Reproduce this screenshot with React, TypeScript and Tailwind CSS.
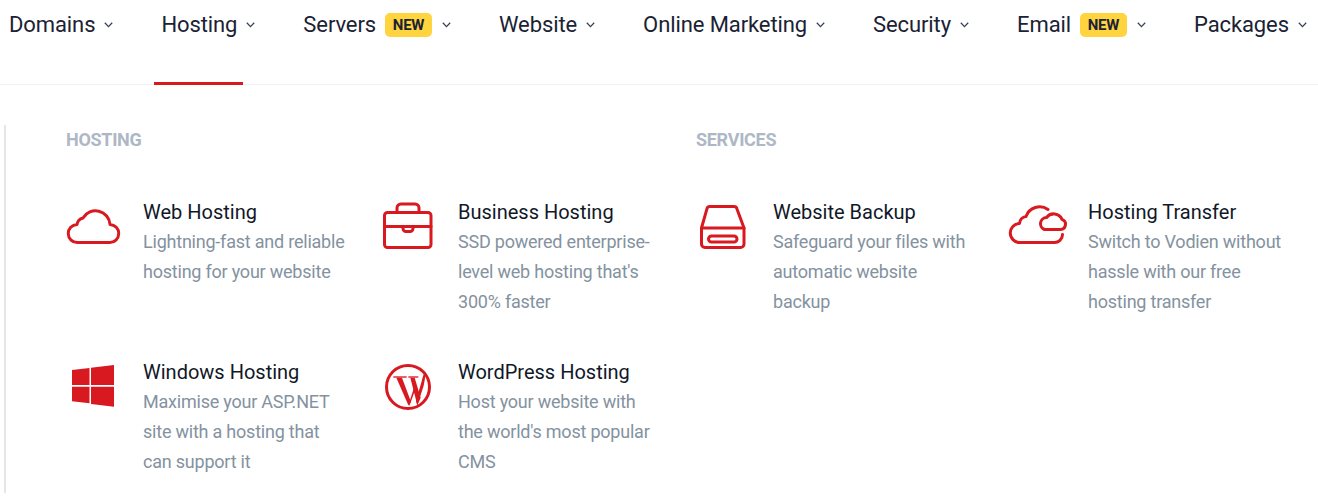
import type { ReactNode } from "react";

const navItems = [
  { label: "Domains" },
  { label: "Hosting", active: true },
  { label: "Servers", badge: true },
  { label: "Website" },
  { label: "Online Marketing" },
  { label: "Security" },
  { label: "Email", badge: true },
  { label: "Packages" },
];

function IconBox({ children }: { children: ReactNode }) {
  return (
    <svg
      viewBox="0 0 60 60"
      fill="none"
      stroke="#d81920"
      strokeWidth="3"
      strokeLinecap="round"
      strokeLinejoin="round"
      className="h-[60px] w-[60px] overflow-visible"
    >
      {children}
    </svg>
  );
}

const CloudIcon = () => (
  <IconBox>
    <path d="M11.5 45.5H43.5A9 9 0 0 0 44 27.5A14.5 14.5 0 0 0 17 21A8 8 0 0 0 11 27.5A9 9 0 0 0 11.5 45.5Z" />
  </IconBox>
);

const BriefcaseIcon = () => (
  <IconBox>
    <rect x="3.5" y="15.5" width="46.5" height="35" rx="3" />
    <path d="M16 15V11a4 4 0 0 1 4-4h14a4 4 0 0 1 4 4v4" />
    <path d="M3.5 29.5H50" />
    <path d="M22 29.5v2a3 3 0 0 0 3 3h4a3 3 0 0 0 3-3v-2" />
  </IconBox>
);

const DriveIcon = () => (
  <IconBox>
    <path d="M14 9.5H38a3 3 0 0 1 2.9 2.2L48 31V47a3.5 3.5 0 0 1-3.5 3.5H9A3.5 3.5 0 0 1 5.5 47V31L11 11.7a3 3 0 0 1 3-2.2Z" />
    <path d="M5.5 31H48" />
    <rect x="12.5" y="39" width="28.5" height="6" rx="3" />
  </IconBox>
);

const TransferIcon = () => (
  <IconBox>
    <path d="M37 12.5A14.5 14.5 0 0 0 15 19.5A7.5 7.5 0 0 0 8.5 26.5A9.5 9.5 0 0 0 9 45.5H43A8 8 0 0 0 51.5 37.5" />
    <path d="M33.5 32.5H49.5A5.2 5.2 0 0 0 51 22.4A9 9 0 0 0 35.5 20.5A6.2 6.2 0 0 0 33.5 32.5Z" />
  </IconBox>
);

const WindowsIcon = () => (
  <IconBox>
    <g fill="#d81920" stroke="none">
      <polygon points="6,13 23.5,11 23.5,28 6,28" />
      <polygon points="25,10.7 48,8 48,28 25,28" />
      <polygon points="6,29.7 23.5,29.7 23.5,46.3 6,44.3" />
      <polygon points="25,29.7 48,29.7 48,49.7 25,47" />
    </g>
  </IconBox>
);

const WordpressIcon = () => (
  <IconBox>
    <circle cx="27" cy="30" r="21.5" />
    <g transform="translate(-6,-4) scale(0.3333)" fill="#d81920" stroke="none">
      <path d="M55 70H95V74H55Z" />
      <path d="M100 70H130V74H100Z" />
      <path d="M64 74H81L108 146L100 157Z" />
      <path d="M100 157L117 104L120 112L104 157Z" />
      <path d="M106 74H119L137 134L127 157Z" />
      <path d="M127 157L146 98Q151 78 151 54Q143 68 140 85L123 144Z" />
    </g>
  </IconBox>
);

const products: { icon: ReactNode; title: string; desc: string }[][] = [
  [
    { icon: <CloudIcon />, title: "Web Hosting", desc: "Lightning-fast and reliable hosting for your website" },
    { icon: <BriefcaseIcon />, title: "Business Hosting", desc: "SSD powered enterprise-level web hosting that's 300% faster" },
    { icon: <DriveIcon />, title: "Website Backup", desc: "Safeguard your files with automatic website backup" },
    { icon: <TransferIcon />, title: "Hosting Transfer", desc: "Switch to Vodien without hassle with our free hosting transfer" },
  ],
  [
    { icon: <WindowsIcon />, title: "Windows Hosting", desc: "Maximise your ASP.NET site with a hosting that can support it" },
    { icon: <WordpressIcon />, title: "WordPress Hosting", desc: "Host your website with the world's most popular CMS" },
  ],
];

function Chevron() {
  return (
    <svg viewBox="0 0 9 6" fill="none" stroke="#374151" strokeWidth="1.3" className="h-[6px] w-[9px]">
      <path d="M0.8 0.8L4.5 4.6L8.2 0.8" />
    </svg>
  );
}

export default function App() {
  return (
    <div className="h-[501px] w-[1318px] overflow-hidden bg-white font-['Roboto',sans-serif]">
      <nav className="flex h-[85px] gap-12 border-b border-[#f0f1f3] pl-[9px] pt-[9px]">
        {navItems.map((item) => (
          <div key={item.label} className="flex h-8 items-center">
            <span className="relative text-[22px] leading-8 tracking-[-0.1px] text-[#1a2233]">
              {item.label}
              {item.active && (
                <span className="absolute -left-[7px] -right-[6px] top-[73px] h-[3px] bg-[#d81920]" />
              )}
            </span>
            {item.badge && (
              <span className="ml-[9px] flex h-6 w-[47px] items-center justify-center rounded-[5px] bg-[#ffd43f] text-[15px] font-bold tracking-[-0.2px] text-[#1a2233]">
                NEW
              </span>
            )}
            <span className={item.badge ? "ml-[10px]" : "ml-[9px]"}>
              <Chevron />
            </span>
          </div>
        ))}
      </nav>

      <div className="ml-1 mt-10 h-[368px] border-l-2 border-[#e4e6ea] pl-[60px]">
        <div className="grid grid-cols-[630px_630px] pt-[5px]">
          <h3 className="text-lg font-bold leading-5 tracking-[-0.3px] text-[#aeb7c6]">HOSTING</h3>
          <h3 className="text-lg font-bold leading-5 tracking-[-0.3px] text-[#aeb7c6]">SERVICES</h3>
        </div>
        <div className="mt-[47px] flex flex-col gap-10">
          {products.map((row, i) => (
            <div key={i} className="grid grid-cols-[315px_315px_315px_315px]">
              {row.map((p) => (
                <div key={p.title} className="flex">
                  <div className="w-[77px] shrink-0">{p.icon}</div>
                  <div className="w-[203px]">
                    <div className="whitespace-nowrap text-xl leading-[30px] text-[#111827]">{p.title}</div>
                    <p className="text-lg leading-[30px] tracking-[-0.22px] text-[#8492a0]">{p.desc}</p>
                  </div>
                </div>
              ))}
            </div>
          ))}
        </div>
      </div>
    </div>
  );
}
